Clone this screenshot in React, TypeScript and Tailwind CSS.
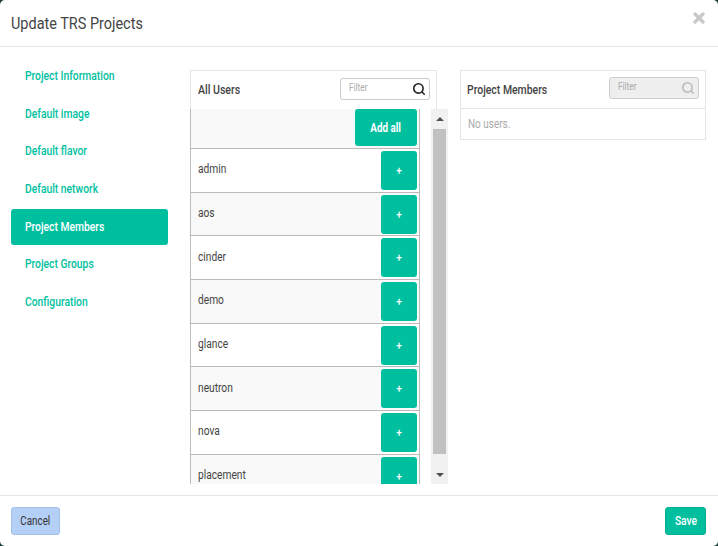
import { Search, X } from 'lucide-react';

const sections = ['Project Information', 'Default image', 'Default flavor', 'Default network', 'Project Members', 'Project Groups', 'Configuration'];
const users = ['admin', 'aos', 'cinder', 'demo', 'glance', 'neutron', 'nova', 'placement'];

const App = () => {
  return (
    <div className="w-[718px] h-[546px] bg-[#1d3b36] overflow-hidden" style={{ fontFamily: 'Roboto, sans-serif' }}>
      <div className="h-full bg-white rounded-[5px] flex flex-col">
        {/* Header */}
        <div className="h-[47px] shrink-0 border-b border-[#e5e5e5] flex items-center justify-between pl-[11px] pr-[11px]">
          <h4 className="text-[17px] leading-none text-[#444] origin-left scale-x-[0.85]">Update TRS Projects</h4>
          <X size={16} strokeWidth={5} className="text-[#c8c8c8] -mt-[10px]" />
        </div>

        {/* Body */}
        <div className="flex-1 min-h-0 flex pt-[23px] pl-[11px] pr-[12px]">
          <ul className="w-[157px] shrink-0 flex flex-col gap-[1.7px] -mt-[12px]">
            {sections.map((s) => (
              <li
                key={s}
                className={`h-[36px] flex items-center pl-[14px] text-[12px] font-medium rounded-[3px] ${s === 'Project Members' ? 'bg-[#00bf9f] text-white' : 'text-[#00bf9f]'}`}
              >
                <span className="origin-left scale-x-[0.86]">{s}</span>
              </li>
            ))}
          </ul>

          <div className="w-[258px] ml-[22px] shrink-0">
            <div className="w-[247px] h-[39px] border border-b-0 border-[#e5e5e5] flex items-center justify-between pl-[7px] pr-[6px]">
              <span className="text-[12px] font-medium text-[#444] origin-left scale-x-[0.88]">All Users</span>
              <div className="w-[90px] h-[22px] border border-[#ccc] rounded-[3px] flex items-center justify-between pl-[8px] pr-[3px] -mt-[3px]">
                <span className="text-[10px] text-[#aaa] origin-left scale-x-[0.83] -mt-[3px]">Filter</span>
                <Search size={14} strokeWidth={2.75} className="text-[#222]" />
              </div>
            </div>
            <div className="h-[375px] flex overflow-hidden">
              <div className="w-[230px] shrink-0 border-x border-[#bbb]">
                <div className="h-[40px] bg-[#f9f9f9] border-b border-[#bbb] flex justify-end items-start pr-[2px]">
                  <button className="w-[62px] h-[37px] bg-[#00bf9f] rounded-[3px] text-white text-[12px] font-bold">
                    <span className="inline-block scale-x-[0.82]">Add all</span>
                  </button>
                </div>
                {users.map((u, i) => (
                  <div
                    key={u}
                    className={`h-[43.7px] border-b border-[#bbb] flex items-center justify-between pl-[7px] pr-[2px] ${i % 2 === 0 ? 'bg-white' : 'bg-[#f9f9f9]'}`}
                  >
                    <span className="text-[12px] text-[#444] -mt-[2px] origin-left scale-x-[0.85]">{u}</span>
                    <button className="w-[36px] h-[39px] bg-[#00bf9f] rounded-[3px] text-white text-[10px] font-medium">+</button>
                  </div>
                ))}
              </div>
              <div className="w-[17px] ml-[11px] shrink-0 bg-[#f1f1f1] flex flex-col items-center">
                <div className="h-[20px] flex items-center justify-center">
                  <div className="w-0 h-0 border-x-[4px] border-x-transparent border-b-[4px] border-b-[#505050]" />
                </div>
                <div className="w-[13px] h-[325px] bg-[#c1c1c1]" />
                <div className="flex-1 flex items-end justify-center pb-[7px]">
                  <div className="w-0 h-0 border-x-[4px] border-x-transparent border-t-[4px] border-t-[#505050]" />
                </div>
              </div>
            </div>
          </div>

          <div className="w-[246px] ml-[12px] shrink-0 self-start">
            <div className="h-[39px] border border-[#e5e5e5] flex items-center justify-between pl-[6px] pr-[6px]">
              <span className="text-[12px] font-medium text-[#444] origin-left scale-x-[0.87]">Project Members</span>
              <div className="w-[90px] h-[22px] border border-[#ccc] bg-[#eee] rounded-[3px] flex items-center justify-between pl-[8px] pr-[3px] -mt-[3px]">
                <span className="text-[10px] text-[#aaa] origin-left scale-x-[0.83] -mt-[3px]">Filter</span>
                <Search size={14} strokeWidth={2.75} className="text-[#bbb]" />
              </div>
            </div>
            <div className="h-[31px] border border-t-0 border-[#e5e5e5] flex items-center pl-[7px] text-[12px] text-[#aaa]">
              <span className="origin-left scale-x-[0.83]">No users.</span>
            </div>
          </div>
        </div>

        {/* Footer */}
        <div className="h-[51px] shrink-0 border-t border-[#e5e5e5] flex items-start justify-between pt-[11px] pl-[11px] pr-[12px]">
          <button className="w-[49px] h-[28px] bg-[#b5d0f7] border border-[#a3c0e8] rounded-[3px] text-[12px] text-[#333]">
            <span className="inline-block scale-x-[0.82]">Cancel</span>
          </button>
          <button className="w-[41px] h-[28px] bg-[#00bf9f] border border-[#00ad90] rounded-[3px] text-[12px] font-medium text-white">
            <span className="inline-block scale-x-[0.85]">Save</span>
          </button>
        </div>
      </div>
    </div>
  );
};

export default App;
